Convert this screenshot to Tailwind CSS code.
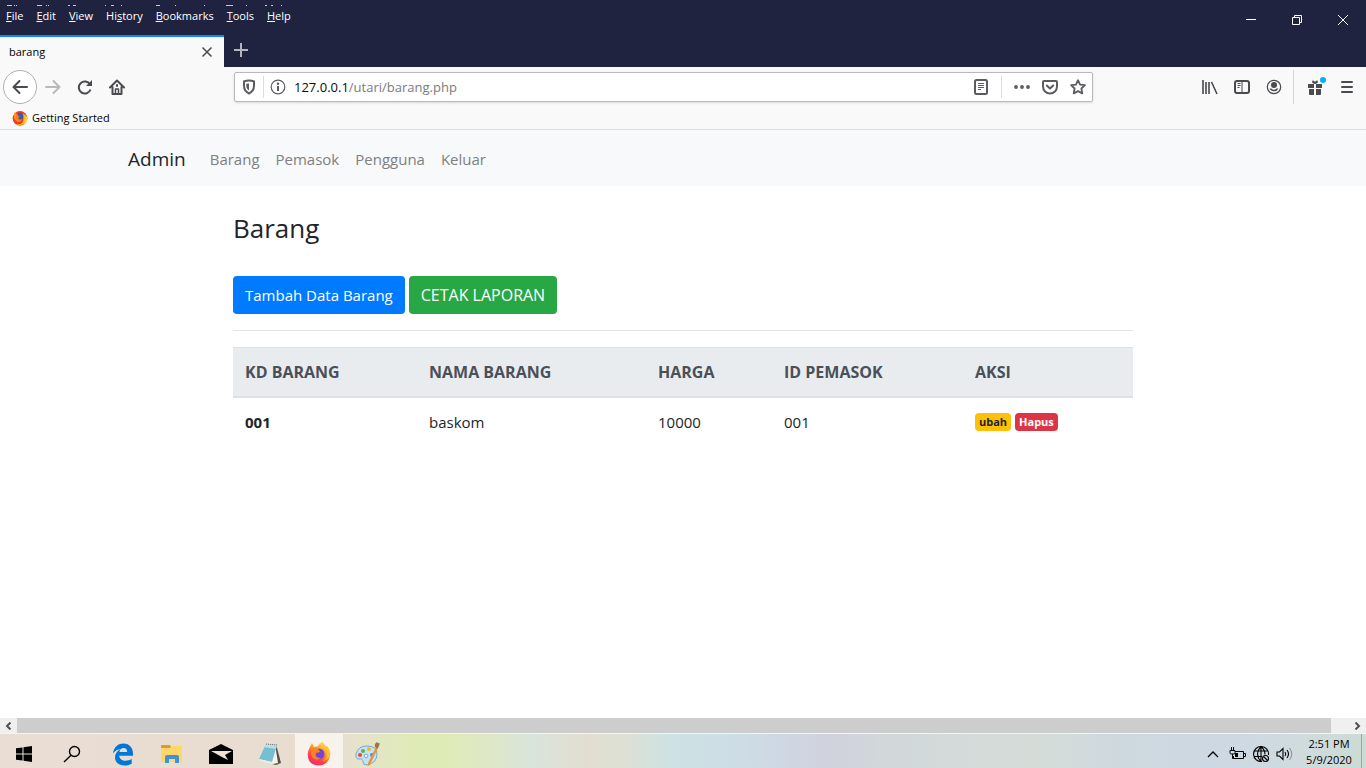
<!DOCTYPE html>
<html lang="id">
<head>
<meta charset="utf-8">
<meta name="viewport" content="width=device-width, initial-scale=1">
<title>barang</title>
<script src="https://cdn.jsdelivr.net/npm/@tailwindcss/browser@4"></script>
</head>
<body class="flex h-screen flex-col overflow-hidden bg-white font-['Segoe_UI','Open_Sans',sans-serif] text-[#212529]">

<!-- Browser window -->
<header class="shrink-0 bg-[#f9f9fa] text-black">
  <div class="bg-[#202340]">
    <div class="relative flex h-[35px] items-start justify-between text-white">
      <svg class="absolute left-0 top-[5px]" width="300" height="1" aria-hidden="true" stroke="#c9c9d2"><path d="M7 .5h5M14 .5h1M16 .5h1M37 .5h5M46 .5h1M48 .5h1M68 .5h2M73 .5h3M105 .5h1M111 .5h3M121 .5h1M156 .5h4M175 .5h1M204 .5h1M226 .5h7M246 .5h1M265 .5h2M271 .5h2M281 .5h1"/></svg>
      <nav class="flex gap-[13px] px-[6px] pt-2 text-[11px] leading-4" aria-label="Menu">
        <button><u>F</u>ile</button><button><u>E</u>dit</button><button><u>V</u>iew</button><button>Hi<u>s</u>tory</button><button><u>B</u>ookmarks</button><button><u>T</u>ools</button><button><u>H</u>elp</button>
      </nav>
      <div class="flex h-[40px]">
        <button class="grid w-[46px] place-items-center" aria-label="Minimize"><svg width="12" height="12" stroke="#fff"><path d="M1 5.500h10"/></svg></button>
        <button class="grid w-[46px] place-items-center" aria-label="Restore"><svg width="12" height="12" fill="none" stroke="#fff"><path d="M1.500 3.500h7v7h-7zM3.500 3V1.500h7v7H9"/></svg></button>
        <button class="grid w-[46px] place-items-center" aria-label="Close window"><svg width="12" height="12" stroke="#fff"><path d="M1 1l10 10M11 1L1 11"/></svg></button>
      </div>
    </div>
    <div class="flex h-8">
      <div class="flex w-[224px] items-center justify-between border-t-2 border-[#0a84ff] bg-[#f9f9fa] pl-[9px] pr-[11px] text-[11px]">
        <span>barang</span>
        <button aria-label="Close tab"><svg width="12" height="12" stroke="#4a4a4f" stroke-width="1.500"><path d="M1.500 1.500l9 9M10.500 1.500l-9 9"/></svg></button>
      </div>
      <button class="grid w-[34px] place-items-center pb-[2px]" aria-label="New tab"><svg width="14" height="14" stroke="#b5b5bf" stroke-width="2"><path d="M7 0v14M0 7h14"/></svg></button>
    </div>
  </div>

  <div class="flex h-10 items-center pr-2 text-[#4a4a4f]">
    <div class="flex w-[234px] shrink-0 items-center pl-[3px]">
      <button class="grid size-[34px] place-items-center rounded-full border border-[#b1b1b3] bg-white" aria-label="Back"><svg width="16" height="16" fill="none" stroke="currentColor" stroke-width="2" stroke-linecap="round" stroke-linejoin="round"><path d="M15 8H1.500M7.500 2L1.500 8l6 6"/></svg></button>
      <button class="grid w-8 place-items-center text-[#b9b9bb]" aria-label="Forward"><svg width="16" height="16" fill="none" stroke="currentColor" stroke-width="2" stroke-linecap="round" stroke-linejoin="round"><path d="M1 8h13.500M8.500 2l6 6-6 6"/></svg></button>
      <button class="grid w-8 place-items-center" aria-label="Reload"><svg width="16" height="16" fill="none" stroke="currentColor" stroke-width="2"><path d="M13 5.500A6 6 0 1 0 13.500 10.500"/><path d="M15 1v6H9z" fill="currentColor" stroke="none"/></svg></button>
      <button class="grid w-8 place-items-center" aria-label="Home"><svg width="16" height="16" fill="none" stroke="currentColor" stroke-width="2" stroke-linecap="round" stroke-linejoin="round"><path d="M1 8.500L8 1.500l7 7M3.500 8v7h9V8"/><path d="M6.500 15v-5h3v5" stroke-width="1.500"/><path d="M8 6v1"/></svg></button>
    </div>
    <div class="flex h-[30px] min-w-0 basis-[859px] items-center rounded-[2px] border border-[#b9b9bb] bg-white px-[6px] text-[#5c5c60] shadow-sm">
      <button class="grid w-4 place-items-center" aria-label="Tracking protection"><svg width="16" height="16" fill="none" stroke="currentColor"><path d="M8 1.500c2 0 3.500.3 5 1v4.300c0 3.800-1.800 6.200-5 7.700-3.200-1.500-5-3.900-5-7.700V2.500c1.500-.7 3-1 5-1z" stroke-width="2"/><path d="M8 4.500v7C6.200 10.300 5.300 8.900 5.300 6.800V4.800C6.200 4.500 7 4.500 8 4.500z" fill="currentColor" stroke="none"/></svg></button>
      <span class="ml-[6px] mr-[6px] h-[22px] w-px bg-[#dcdcde]"></span>
      <button class="grid w-4 place-items-center" aria-label="Site information"><svg width="16" height="16" fill="none" stroke="currentColor"><circle cx="8" cy="8" r="6.800" stroke-width="1.200"/><path d="M8 7v5" stroke-width="2"/><circle cx="8" cy="4.700" r="1.200" fill="currentColor" stroke="none"/></svg></button>
      <div class="relative ml-2 min-w-0 flex-1 text-[13px] leading-5">
        <div class="pointer-events-none absolute inset-0 whitespace-nowrap text-[#7b7b7f]" aria-hidden="true"><span class="text-[#0c0c0d]">127.0.0.1</span>/utari/barang.php</div>
        <input class="block w-full bg-transparent text-transparent outline-none" aria-label="Address" value="127.0.0.1/utari/barang.php">
      </div>
      <button aria-label="Reader view"><svg width="16" height="16" fill="none" stroke="currentColor"><rect x="2" y="1" width="12" height="14" rx="1.500" stroke-width="2"/><path d="M5 4.500h6M5 6.500h6M5 8.500h6M5 10.500h3"/></svg></button>
      <span class="mx-3 h-[22px] w-px bg-[#dcdcde]"></span>
      <div class="flex items-center gap-3">
        <button aria-label="Page actions"><svg width="16" height="16" fill="currentColor"><circle cx="2" cy="8" r="1.900"/><circle cx="8" cy="8" r="1.900"/><circle cx="14" cy="8" r="1.900"/></svg></button>
        <button aria-label="Save to Pocket"><svg width="16" height="16" fill="none" stroke="currentColor" stroke-width="2" stroke-linecap="round" stroke-linejoin="round"><path d="M2 2h12q1 0 1 1v4.500a7 7 0 0 1-14 0V3q0-1 1-1z"/><path d="M4.800 6.500L8 9.500l3.200-3"/></svg></button>
        <button aria-label="Bookmark this page"><svg width="16" height="16" fill="none" stroke="currentColor" stroke-width="1.800" stroke-linejoin="round"><path d="M8 1.200l2.100 4.400 4.800.6-3.500 3.300.9 4.900L8 12.100l-4.300 2.300.9-4.900L1.100 6.200l4.800-.6z"/></svg></button>
      </div>
    </div>
    <div class="ml-auto flex items-center">
      <button class="grid w-8 place-items-center" aria-label="Library"><svg width="16" height="16" fill="none" stroke="currentColor" stroke-width="1.600"><path d="M1 1v14M4 3v12M7 3v12M9.500 3l5.500 12"/></svg></button>
      <button class="grid w-8 place-items-center" aria-label="Sidebars"><svg width="16" height="16" fill="none" stroke="currentColor"><rect x="1" y="2" width="14" height="12" rx="2" stroke-width="2"/><path d="M8 2v12M3.500 4.500h3M3.500 6.500h3M3.500 8.500h2"/></svg></button>
      <button class="grid w-8 place-items-center" aria-label="Account"><svg width="16" height="16"><circle cx="8" cy="8" r="6.700" fill="none" stroke="currentColor" stroke-width="1.200"/><circle cx="8" cy="6" r="3" fill="currentColor"/><path d="M3.500 9.500h1.800a4 4 0 0 0 5.400 0h1.800a5 5 0 0 1-9 0z" fill="currentColor"/></svg></button>
      <span class="ml-[3px] h-[34px] w-px bg-[#d7d7db]"></span>
      <button class="grid w-[42px] place-items-center" aria-label="What's new"><svg width="22" height="22" fill="currentColor"><path d="M4 8h6v4H4zM12 8h6v4h-6zM5 13h5v6H6q-1 0-1-1zM12 13h5v5q0 1-1 1h-4z"/><path d="M11 8Q7 7 8.500 4.500 10 4 11 6q1-2 2.500-1.500Q15 7 11 8z"/><circle cx="19" cy="4" r="3" fill="#00b3f4"/></svg></button>
      <button class="grid w-[22px] place-items-center" aria-label="Open menu"><svg width="12" height="12" stroke="currentColor" stroke-width="2" stroke-linecap="round"><path d="M1 1h10M1 6h10M1 11h10"/></svg></button>
    </div>
  </div>

  <div class="flex h-[23px] items-center border-b border-[#dddddf] pl-3 text-[11px]">
    <a href="#" class="flex items-center gap-1"><svg width="16" height="16" viewBox="0 0 24 24" aria-hidden="true"><circle cx="12" cy="12.500" r="11" fill="#f4352c"/><path d="M14 1q1 4 6 7 4 7-1 12-7 5-13 1 10 2 11-6Q18 6 14 1z" fill="#ffbd19"/><path d="M20 6q5 7 1 13l-4 3q5-9 3-16z" fill="#ffde2c"/><path d="M3 7L4 3l3 3 4-2Q8 8 12 10l-4 2q1 5 7 3-3 5-8 2-5-4-4-10z" fill="#ff9519"/><circle cx="12" cy="9" r="5" fill="#315fae"/><path d="M6 6l3 1q-1 2 3 3l-3 2q2 4 6 2-3 5-7 2-3-4-2-10z" fill="#ff7915"/></svg>Getting Started</a>
  </div>
</header>

<!-- Page -->
<main class="min-h-0 flex-1 overflow-hidden text-[15px] leading-6">
  <nav class="bg-[#f8f9fa] px-4">
    <div class="mx-auto flex h-14 max-w-[1110px] items-center gap-6 pt-[2px]">
      <a href="#" class="text-[19px]">Admin</a>
      <div class="flex gap-4 text-[#808081]"><a href="#">Barang</a><a href="#">Pemasok</a><a href="#">Pengguna</a><a href="#">Keluar</a></div>
    </div>
  </nav>
  <section class="mx-auto max-w-[900px] pt-6">
    <h1 class="text-[26px] leading-9">Barang</h1>
    <div class="mt-[30px] flex gap-1 text-white">
      <button class="h-[38px] rounded-[4px] bg-[#007bff] px-3">Tambah Data Barang</button>
      <button class="h-[38px] rounded-[4px] bg-[#28a745] px-3 text-[16px]">CETAK LAPORAN</button>
    </div>
    <hr class="my-4 border-[#e5e5e5]">
    <table class="w-full table-fixed border-collapse text-left">
      <colgroup><col class="w-[184px]"><col class="w-[229px]"><col class="w-[126px]"><col class="w-[191px]"><col></colgroup>
      <thead class="border-t border-b-2 border-[#dee2e6] bg-[#e9ecef] text-[16px] text-[#495057]">
        <tr class="h-[49px]"><th scope="col" class="px-3">KD BARANG</th><th scope="col" class="px-3">NAMA BARANG</th><th scope="col" class="px-3">HARGA</th><th scope="col" class="px-3">ID PEMASOK</th><th scope="col" class="px-3">AKSI</th></tr>
      </thead>
      <tbody>
        <tr class="h-[50px]"><th scope="row" class="px-3">001</th><td class="px-3">baskom</td><td class="px-3">10000</td><td class="px-3">001</td>
        <td class="px-3"><div class="flex gap-1 text-[11px] font-bold leading-[18px]"><a href="#" class="rounded-[4px] bg-[#ffc107] px-1">ubah</a><a href="#" class="rounded-[4px] bg-[#dc3545] px-1 text-white">Hapus</a></div></td></tr>
      </tbody>
    </table>
  </section>
</main>

<!-- Horizontal scrollbar -->
<div class="flex h-4 shrink-0 border-b border-[#f4f4f4] bg-[#f0f0f0] text-[#505050]">
  <button class="grid w-[17px] place-items-center" aria-label="Scroll left"><svg width="7" height="8" fill="none" stroke="currentColor" stroke-width="2"><path d="M5.500 .5L2 4l3.500 3.500"/></svg></button>
  <div class="flex-1 bg-[#cdcdcd]"></div>
  <button class="grid w-[35px] place-items-center pl-[18px]" aria-label="Scroll right"><svg width="7" height="8" fill="none" stroke="currentColor" stroke-width="2"><path d="M1.500 .5L5 4 1.500 7.500"/></svg></button>
</div>

<!-- Taskbar -->
<footer class="flex h-[34px] shrink-0 items-start justify-between overflow-hidden bg-[linear-gradient(90deg,#e9ddd5_0%,#e9ddd0_24%,#e4e4c8_27%,#deebb6_30%,#deebb8_33%,#dde7c8_36%,#d9e4dc_39%,#e3ddd0_43%,#dce0d5_46%,#cde2e4_49%,#cddde6_54%,#cfd6e2_58%,#d0d2dc_61%,#d2d8da_65%,#d5dcd8_76%,#ced9df_82%,#cdd8e3_90%,#d0dbde_95%,#ccdbd3_100%)] text-black">
  <div class="flex h-10">
    <button class="grid w-12 place-items-center" aria-label="Start"><svg width="16" height="16"><path d="M0 2.300L6.500 1.400V7.500H0zM7.500 1.200L16 0v7.500H7.500zM0 8.500h6.500v6.100L0 13.700zM7.500 8.500H16V16L7.500 14.800z"/></svg></button>
    <button class="grid w-12 place-items-center" aria-label="Search"><svg width="18" height="18" fill="none" stroke="#000" stroke-width="1.400"><circle cx="11.500" cy="6.500" r="5"/><path d="M8 10.200L1 17"/></svg></button>
    <button class="grid w-[54px] place-items-center" aria-label="Edge"><svg width="22" height="23" viewBox="0 0 22 23"><path d="M1 10.500C2 3.500 6.500.5 11.500.5c6 0 9.500 4.500 9.500 10v2.300H7.200c.3 3.300 3 5 6.300 5 2.500 0 4.300-.6 6.200-1.700v4.600c-2.200 1.300-4.700 1.800-7.200 1.800C7 22.500 3 19.500 3 14.500c0-3.800 2.200-6.700 5.800-8.400C5.800 6.300 3 8 1 10.500zM7.400 9h7.800c0-2.500-1.300-4-3.600-4S7.900 6.600 7.400 9z" fill="#0078d7"/></svg></button>
    <button class="grid w-[44px] place-items-center" aria-label="File Explorer"><svg width="22" height="18"><path d="M0 0h9l1 2v4H0z" fill="#dca01f"/><path d="M0 3h9l2-2h10v16H0z" fill="#ffd667"/><path d="M4 18v-6q0-2 2-2h10q2 0 2 2v6h-4v-4H8v4z" fill="#3d93d6"/></svg></button>
    <button class="grid w-[54px] place-items-center" aria-label="Mail"><svg width="24" height="20"><path d="M0 6L12 0l12 6v14H0z"/><path d="M2 7h21l-7 4 3 5-6-3z" fill="#eee1d7"/></svg></button>
    <button class="grid w-[47px] place-items-center pr-1" aria-label="Notepad"><svg width="24" height="24"><path d="M18 2l5 19-5 2-4-1z" fill="#554f4a"/><path d="M17 2l3 19-5 1-3-1z" fill="#f5f5ee"/><path d="M8 2l11 1-5 17L1 17z" fill="#75bfd0"/><path d="M8 2l11 1-1 4L6 5z" fill="#b9e0e5"/><path d="M1 17l13 3 1 2L2 19z" fill="#e5eeee"/><path d="M8 2l11 1" stroke="#687c83" stroke-dasharray="1 1"/></svg></button>
    <button class="grid w-12 place-items-center bg-[#f8f2ed]" aria-label="Firefox"><svg width="24" height="24" viewBox="0 0 24 24"><defs><linearGradient id="fire" x1=".8" y1="0" x2=".2" y2="1"><stop offset="0" stop-color="#fff044"/><stop offset=".4" stop-color="#ff9825"/><stop offset=".7" stop-color="#ff414b"/><stop offset="1" stop-color="#e92880"/></linearGradient></defs><path d="M3 5l2-4 2 4 4-1q1-3 5-4 0 3 3 5l1-1q4 4 3 10-2 9-11 9.500Q2 23 1 15q-1-5 2-10z" fill="url(#fire)"/><circle cx="12" cy="12" r="5.500" fill="#7544d6"/><path d="M5 6q4-1 7 2l1 2-4 1q-2 5 5 5-5 4-9-1-2-4 0-9z" fill="#ff8222"/><path d="M15 0q0 4 4 7 3 8-3 12 5-1 7-5 0-7-4-10-3-2-4-4z" fill="#ffc431" opacity=".8"/></svg></button>
    <button class="grid w-[50px] place-items-center" aria-label="Paint"><svg width="26" height="24"><path d="M12 4Q22 4 22 12q0 9-10 11-4 0-4-3 0-4-4-3-4 0-3-5 2-8 11-8z" fill="#c5e1f3" stroke="#7ba8c9"/><circle cx="5" cy="13" r="2" fill="#dd4c40"/><circle cx="8" cy="9" r="2" fill="#5fb548"/><circle cx="14" cy="7" r="2" fill="#efb92f"/><circle cx="17" cy="13" r="2" fill="#4b8cdd"/><circle cx="11" cy="14" r="1.800" fill="#fff" stroke="#7ba8c9"/><path d="M21 5l2 1-8 17-2 1 0-3z" fill="#e8953d"/><path d="M20 5q-1-3 2-5 1 2 3 1-1 4-3 6z" fill="#a67348"/></svg></button>
  </div>
  <div class="flex h-10 items-center">
    <button class="grid w-6 place-items-center" aria-label="Show hidden icons"><svg width="12" height="8" fill="none" stroke="#000" stroke-width="1.300"><path d="M1 7l5-5 5 5"/></svg></button>
    <button class="grid w-6 place-items-center" aria-label="Battery"><svg width="17" height="14" fill="none" stroke="#000"><path d="M6 4.500h8.500v7H4.500V9M15 6.500h1.500v3H15M2.500 0v3M4.500 0v3M1 3.500h5v2q0 1.500-1 1.500H2Q1 7 1 5.500zM3.500 7v4.500h1"/><path d="M6 6h3v4H6z" fill="#000" stroke="none"/></svg></button>
    <button class="grid w-6 place-items-center" aria-label="Network"><svg width="17" height="17" fill="none" stroke="#000" stroke-width="1.100"><path d="M15.500 9A7.500 7.500 0 1 0 9 15.500M8 .5Q1 8 8 15.500M8 .5q4 3.500 4 8M1 5h14M1 10.500h8M8 .5v15"/><circle cx="12.500" cy="12.500" r="3"/><path d="M10.500 10.500l4 4"/></svg></button>
    <button class="grid w-6 place-items-center" aria-label="Volume"><svg width="18" height="14" fill="none" stroke="#000" stroke-width="1.100"><path d="M1 5h2.500L7 1.500v11L3.500 9H1z"/><path d="M9 5q1.500 2 0 4M11 3q3 4 0 8"/><path d="M13.500 1q4.500 6 0 12" stroke="#8c969c"/></svg></button>
    <div class="flex h-[34px] w-[64px] flex-col items-center self-start pt-[2px] text-[11px] leading-4"><time datetime="2020-05-09T14:51">2:51 PM</time><span>5/9/2020</span></div>
    <span class="mr-1 h-10 w-px bg-[#9ba6a5]"></span>
  </div>
</footer>
</body>
</html>
